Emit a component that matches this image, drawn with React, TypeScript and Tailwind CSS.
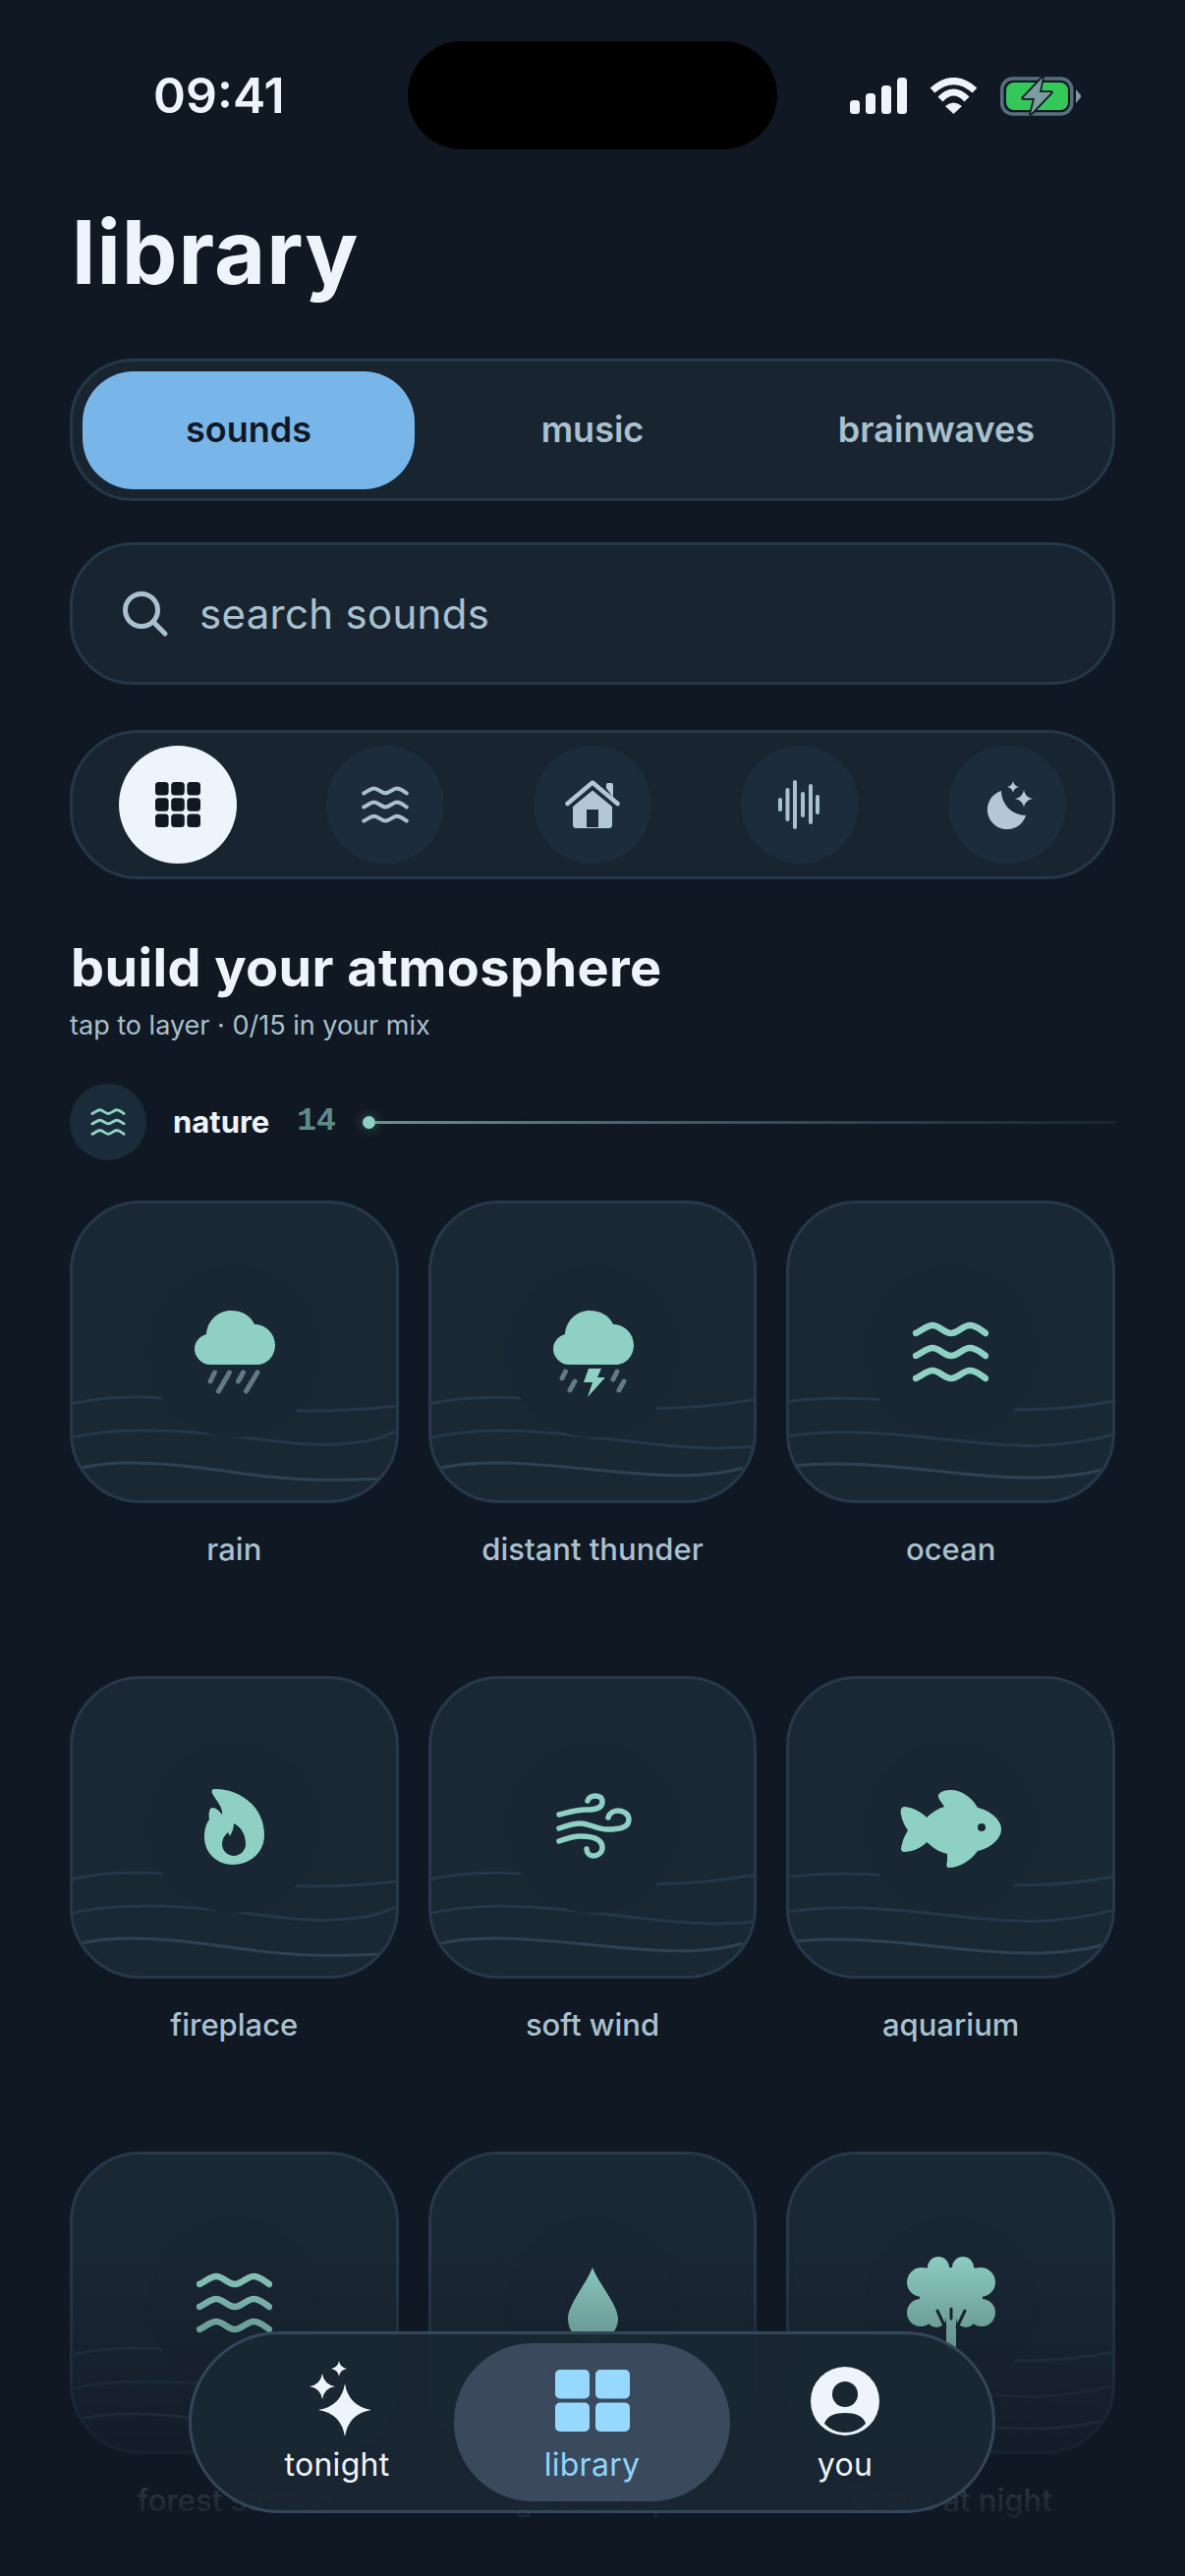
/**
 * Sound library screen: tabs, search, category filter and the tile grid.
 */

import type { ReactNode } from 'react';

const TEAL = '#8fd0c5';
const DARK = '#192633';
const DASH = '#5f7a80';

const CLOUD = 'M26 63C17 63 10 55 10 47C10 40 15 34 22 32C23 18 34 8 47 8C58 8 67 13 71 22C83 22 92 32 92 43C92 54 84 63 74 63Z';

function StatusIcons() {
  return (
    <div className="flex items-center gap-[22px] pt-[1px]">
      <svg width="58" height="37" viewBox="0 0 58 37" fill="#edf4fb">
        <rect x="0" y="23" width="10" height="14" rx="3.5" />
        <rect x="16" y="16" width="10" height="21" rx="3.5" />
        <rect x="32" y="8" width="10" height="29" rx="3.5" />
        <rect x="48" y="0" width="10" height="37" rx="3.5" />
      </svg>
      <svg width="51" height="37" viewBox="0 0 51 37" fill="none" stroke="#edf4fb" strokeWidth="7">
        <path d="M4 13Q25.5 -6 47 13" />
        <path d="M12 22Q25.5 8 39 22" />
        <path d="M17 29Q25.5 22 34 29L25.5 37Z" fill="#edf4fb" stroke="none" />
      </svg>
      <svg width="82" height="41" viewBox="0 0 82 41" fill="none" className="overflow-visible">
        <rect x="1.7" y="3" width="71" height="36" rx="11" stroke="#55707c" strokeWidth="3.5" />
        <rect x="6" y="7" width="63" height="28" rx="8" fill="#34c759" />
        <path d="M77 14L82 20L82 22L77 28Z" fill="#7d9c9e" />
        <path d="M43 2L23 23H35L31 39L52 17H40Z" fill="#7d9c9e" stroke="#101823" strokeWidth="3.5" strokeLinejoin="round" paintOrder="stroke" />
      </svg>
    </div>
  );
}

function WaveIcon({ width, height, color, strokeWidth }: { width: number; height: number; color: string; strokeWidth: number }) {
  return (
    <svg width={width} height={height} viewBox="0 0 77 62" fill="none" stroke={color} strokeWidth={strokeWidth} strokeLinecap="round">
      {[0, 23, 46].map((dy) => (
        <path key={dy} transform={`translate(0 ${dy})`} d="M3 12C10 9 14 4 20 4C27 4 32 12 39 12C46 12 51 4 58 4C65 4 69 9 74 12" />
      ))}
    </svg>
  );
}

function TileSvg({ children }: { children: ReactNode }) {
  return (
    <svg width="100" height="100" viewBox="0 0 100 100" fill={TEAL} className="overflow-visible">
      {children}
    </svg>
  );
}

function RainIcon() {
  return (
    <TileSvg>
      <path d={CLOUD} />
      <g stroke={DASH} strokeWidth="5" strokeLinecap="round">
        <path d="M30.5 71L26 80" />
        <path d="M45.5 71L34.5 90" />
        <path d="M59.5 71L54.5 80" />
        <path d="M74 71L62.5 90" />
      </g>
    </TileSvg>
  );
}

function ThunderIcon() {
  return (
    <TileSvg>
      <path d={CLOUD} />
      <g stroke={DASH} strokeWidth="5" strokeLinecap="round">
        <path d="M22.5 70L19 77" />
        <path d="M32 80L27 89" />
        <path d="M75 70L71 78" />
        <path d="M82 80L77 89" />
      </g>
      <path d="M46 67H59L55 76H63L45 96L50 81H41Z" />
    </TileSvg>
  );
}

function FireIcon() {
  return (
    <TileSvg>
      <path d="M30 11C52 10 81 26 81 58C81 76 66 88 49 88C33 88 20 76 20 60C20 52 22 46 25 42C24 36 25 30 28 30C32 30 35 33 38 37C39 30 33 24 29 17C27 14 27 11 30 11Z" />
      <path fill={DARK} d="M50 46C58 50 62 58 62 67C62 74 56 79 50 79C44 79 38 74 38 67C38 62 41 58 44 55L46 59C48 55 50 51 50 46Z" />
    </TileSvg>
  );
}

function WindIcon() {
  return (
    <TileSvg>
      <g fill="none" stroke={TEAL} strokeWidth="5.5" strokeLinecap="round">
        <path d="M16 37C24 35 34 32 43 32C52 32 60 31 60 24C60 19 56 18 53 18C49 18 46 20 45 23" />
        <path d="M16 51C24 48 31 46 38 46C47 46 54 52 65 52C76 52 87 51 87 42C87 36 81 33 76 33C71 33 67 36 66 40" />
        <path d="M16 64C24 61 32 59 38 59C49 59 60 61 60 71C60 76 55 79 51 79C47 79 44 76 44 72" />
      </g>
    </TileSvg>
  );
}

function FishIcon() {
  return (
    <TileSvg>
      <path d="M25 40C30 35 36 31 43 29C40 24 36 20 37 17C39 13 45 12 50 12C60 12 71 19 77 30C90 33 101 42 101 52C101 62 90 71 77 74C70 84 58 91 48 91C45 91 45 88 46 84C46 81 46 79 46 77C37 75 31 70 25 65C20 71 10 75 2 75C-2 75 -1 70 0 67C1 61 4 57 6 53C3 49 0 43 -1 37C-2 32 -1 29 3 29C11 30 20 34 25 40Z" />
      <circle cx="81" cy="50" r="4" fill={DARK} />
    </TileSvg>
  );
}

function DropIcon() {
  return (
    <TileSvg>
      <path d="M50 14C56 30 76 52 76 66C76 80 64 90 50 90C36 90 25 80 25 66C25 52 44 30 50 14Z" />
    </TileSvg>
  );
}

function TreeIcon() {
  return (
    <TileSvg>
      <circle cx="37" cy="14" r="11" />
      <circle cx="62" cy="14" r="11" />
      <circle cx="20" cy="29" r="15" />
      <circle cx="80" cy="29" r="15" />
      <circle cx="19" cy="60" r="14" />
      <circle cx="81" cy="60" r="14" />
      <circle cx="35" cy="65" r="10" />
      <circle cx="65" cy="65" r="10" />
      <rect x="18" y="14" width="64" height="50" rx="10" />
      <path d="M45 60H55V98H45Z" />
      <g fill="none" stroke={DARK} strokeWidth="3" strokeLinecap="round">
        <path d="M36 58L44 75" />
        <path d="M64 58L56 75" />
        <path d="M50 56V66" />
      </g>
    </TileSvg>
  );
}

const WAVE_SETS = [
  ['M0 207C40 198 90 198 140 206S250 218 334 209', 'M0 242C40 232 90 232 150 238S230 250 270 248S320 240 334 234', 'M8 273C50 262 110 268 170 277S270 285 320 283'],
  ['M0 207C40 198 90 198 150 206S270 214 334 202', 'M0 242C40 232 90 232 160 240S280 256 334 250', 'M8 273C50 262 110 268 170 274S280 284 320 272'],
  ['M0 205C50 198 100 202 160 208S270 216 334 204', 'M0 240C50 232 100 236 170 244S280 252 334 238', 'M8 270C60 264 120 272 180 278S280 284 322 274'],
];

function SoundTile({ name, waves, children }: { name: string; waves: number; children: ReactNode }) {
  return (
    <div className="flex flex-col items-center">
      <div className="relative flex h-[308px] w-full items-center justify-center overflow-hidden rounded-[72px] border-[3px] border-[#26394b] bg-[#1a2834]">
        <svg width="334" height="308" viewBox="0 0 334 308" fill="none" strokeWidth="3" className="absolute top-[-3px] left-[-3px]">
          <path d={WAVE_SETS[waves][0]} stroke="#24384a" />
          <path d={WAVE_SETS[waves][1]} stroke="#24384a" />
          <path d={WAVE_SETS[waves][2]} stroke="#2f4252" />
        </svg>
        <div className="absolute h-[174px] w-[174px] rounded-full bg-[#192633]" />
        <div className="relative">{children}</div>
      </div>
      <p className="mt-[28px] text-[31px] leading-[38px] font-medium text-[#a9c1ce]">{name}</p>
    </div>
  );
}

function FilterButton({ active, children }: { active?: boolean; children: ReactNode }) {
  return (
    <div className={`flex h-[120px] w-[120px] items-center justify-center rounded-full ${active ? 'bg-[#edf4fb]' : 'bg-[#1c2c3b]'}`}>
      {children}
    </div>
  );
}

function star(x: number, y: number, r: number) {
  const c = r * 0.14;
  return `M${x} ${y - r}Q${x + c} ${y - c} ${x + r} ${y}Q${x + c} ${y + c} ${x} ${y + r}Q${x - c} ${y + c} ${x - r} ${y}Q${x - c} ${y - c} ${x} ${y - r}Z`;
}

function NavItem({ label, active, className, children }: { label: string; active?: boolean; className: string; children: ReactNode }) {
  return (
    <div className={`flex h-[161px] shrink-0 flex-col items-center rounded-[80px] ${className} ${active ? 'bg-[#3a495c]' : ''}`}>
      <div className="flex h-[104px] items-end">{children}</div>
      <span className={`text-[32px] leading-[40px] tracking-[0.3px] ${active ? 'text-[#8fd4ff]' : 'text-[#edf4fb]'}`}>{label}</span>
    </div>
  );
}

export default function App() {
  return (
    <div className="relative h-[2622px] w-[1206px] overflow-hidden bg-[#101823] font-['Inter',sans-serif]">
      {/* status bar */}
      <div className="flex h-[152px] items-center pt-[42px]">
        <div className="w-[415px] pl-[156px] text-[50px] leading-none font-semibold text-[#edf4fb]">09:41</div>
        <div className="h-[110px] w-[376px] rounded-[55px] bg-black" />
        <div className="pl-[74px]">
          <StatusIcons />
        </div>
      </div>

      <main className="px-[71px]">
        <h1 className="pt-[51px] pb-[55px] pl-[2px] text-[90px] leading-[107px] font-bold tracking-[1px] text-[#edf4fb]">library</h1>

        {/* tabs */}
        <div className="flex h-[145px] items-center justify-between rounded-[64px] border-[3px] border-[#24384a] bg-[#182531] px-[10px] text-[36px] font-semibold text-[#a9c1ce]">
          <div className="flex h-[120px] w-[338px] items-center justify-center rounded-[52px] bg-[#78b6ea] pb-[2px] text-[#101823]">sounds</div>
          <div className="flex h-[120px] w-[338px] items-center justify-center pb-[2px]">music</div>
          <div className="flex h-[120px] w-[338px] items-center justify-center pb-[2px]">brainwaves</div>
        </div>

        {/* search */}
        <div className="mt-[42px] flex h-[145px] items-center gap-[31px] rounded-[64px] border-[3px] border-[#24384a] bg-[#182531] pl-[50px]">
          <svg width="48" height="48" viewBox="0 0 48 48" fill="none" stroke="#a9c1ce" strokeWidth="5" strokeLinecap="round">
            <circle cx="20" cy="20" r="16.5" />
            <path d="M32 32L44 44" />
          </svg>
          <span className="text-[42px] tracking-[0.3px] text-[#a9c1ce]">search sounds</span>
        </div>

        {/* category filter */}
        <div className="mt-[46px] flex h-[152px] items-center justify-between rounded-[70px] border-[3px] border-[#24384a] bg-[#182531] px-[47px]">
          <FilterButton active>
            <svg width="46" height="46" viewBox="0 0 46 46" fill="#101823">
              {[0, 16.2, 32.4].flatMap((y) =>
                [0, 16.2, 32.4].map((x) => <rect key={`${x}-${y}`} x={x} y={y} width="13.6" height="13.6" rx="3.5" />),
              )}
            </svg>
          </FilterButton>
          <FilterButton>
            <WaveIcon width={48} height={38} color="#a9c1ce" strokeWidth={6.5} />
          </FilterButton>
          <FilterButton>
            <svg width="56" height="50" viewBox="0 0 56 50" fill="none">
              <path d="M42 8V4.5C42 3.5 43 3 44 3H47C48 3 49 3.5 49 4.5V18Z" fill="#b3c7d7" />
              <path d="M2.5 24L28 2.5L53.5 24" stroke="#b3c7d7" strokeWidth="4.5" strokeLinecap="round" strokeLinejoin="round" />
              <path d="M28 10.5L48 27V46C48 48 46.5 49 45 49H11C9.5 49 8 48 8 46V27Z M22 30V48H34V30Z" fill="#b3c7d7" fillRule="evenodd" />
            </svg>
          </FilterButton>
          <FilterButton>
            <svg width="46" height="50" viewBox="0 0 46 50" fill="none" stroke="#a9c1ce" strokeWidth="4" strokeLinecap="round">
              <path d="M3 20V30" />
              <path d="M10.5 10V40" />
              <path d="M18 2V48" />
              <path d="M26 14V36" />
              <path d="M34 6V43" />
              <path d="M41 17V33" />
            </svg>
          </FilterButton>
          <FilterButton>
            <svg width="60" height="60" viewBox="0 0 60 60" fill="#b3c7d7" className="overflow-visible">
              <path d="M24 16A20 20 0 1 0 49 41A25 25 0 0 1 24 16Z" />
              <path d={star(36, 12, 6)} />
              <path d={star(47, 24, 9)} />
            </svg>
          </FilterButton>
        </div>

        <h2 className="mt-[58px] pl-[1px] text-[54px] leading-[64px] font-bold tracking-[0.4px] text-[#edf4fb]">build your atmosphere</h2>
        <p className="mt-[10px] text-[27px] leading-[34px] text-[#a9c1ce]">tap to layer · 0/15 in your mix</p>

        {/* nature group header */}
        <div className="mt-[42px] flex h-[78px] items-center">
          <div className="flex h-[78px] w-[78px] items-center justify-center rounded-full bg-[#1a2b39]">
            <WaveIcon width={36} height={28} color={TEAL} strokeWidth={6.5} />
          </div>
          <span className="ml-[27px] text-[31px] font-bold text-[#edf4fb]">nature</span>
          <span className="ml-[28px] font-['Liberation_Mono',monospace] text-[33px] font-bold text-[#5f8a8a]">14</span>
          <div className="ml-[27px] h-[13px] w-[13px] rounded-full bg-[#8fd0c5] shadow-[0_0_12px_#8fd0c566]" />
          <div className="h-[3px] flex-1 bg-linear-to-r from-[#6a9090] via-[#3a4f5e] to-[#182531]" />
        </div>

        {/* tiles */}
        <div className="mt-[41px] grid grid-cols-3 gap-x-[30px] gap-y-[110px]">
          <SoundTile name="rain" waves={0}><RainIcon /></SoundTile>
          <SoundTile name="distant thunder" waves={1}><ThunderIcon /></SoundTile>
          <SoundTile name="ocean" waves={2}>
            <WaveIcon width={77} height={62} color={TEAL} strokeWidth={6.5} />
          </SoundTile>
          <SoundTile name="fireplace" waves={0}><FireIcon /></SoundTile>
          <SoundTile name="soft wind" waves={1}><WindIcon /></SoundTile>
          <SoundTile name="aquarium" waves={2}><FishIcon /></SoundTile>
          <SoundTile name="forest stream" waves={0}>
            <WaveIcon width={77} height={62} color={TEAL} strokeWidth={6.5} />
          </SoundTile>
          <SoundTile name="gentle drip" waves={1}><DropIcon /></SoundTile>
          <SoundTile name="forest at night" waves={2}><TreeIcon /></SoundTile>
        </div>
      </main>

      {/* fade under the tab bar */}
      <div className="absolute right-0 bottom-0 left-0 h-[332px] bg-linear-to-b from-transparent to-[#101823] to-[88%]" />

      {/* tab bar */}
      <nav className="absolute top-[2373px] left-[192px] flex h-[185px] w-[821px] items-center rounded-[92px] border-[3px] border-[#33465a] bg-[#1a2733]/97 pl-[29px]">
        <NavItem label="tonight" className="w-[238px]">
          <svg width="70" height="77" viewBox="0 0 70 77" fill="#edf4fb" className="mb-[9px] ml-[8px]">
            <path d={star(39, 50, 27)} />
            <path d={star(16, 26, 13)} />
            <path d={star(33, 8, 8)} />
          </svg>
        </NavItem>
        <NavItem label="library" active className="w-[281px]">
          <svg width="76" height="63" viewBox="0 0 76 63" fill="#96d8ff" className="mb-[14px]">
            <rect x="0" y="0" width="35" height="29.5" rx="5" />
            <rect x="41" y="0" width="35" height="29.5" rx="5" />
            <rect x="0" y="33.5" width="35" height="29.5" rx="5" />
            <rect x="41" y="33.5" width="35" height="29.5" rx="5" />
          </svg>
        </NavItem>
        <NavItem label="you" className="w-[234px]">
          <svg width="70" height="70" viewBox="0 0 70 70" className="mb-[10px]">
            <circle cx="35" cy="35" r="35" fill="#edf4fb" />
            <circle cx="35" cy="28" r="13" fill="#1a2733" />
            <path d="M14 58C16 50 25 47 35 47C45 47 54 50 56 58C50 64 43 67 35 67C27 67 20 64 14 58Z" fill="#1a2733" />
          </svg>
        </NavItem>
      </nav>
    </div>
  );
}
